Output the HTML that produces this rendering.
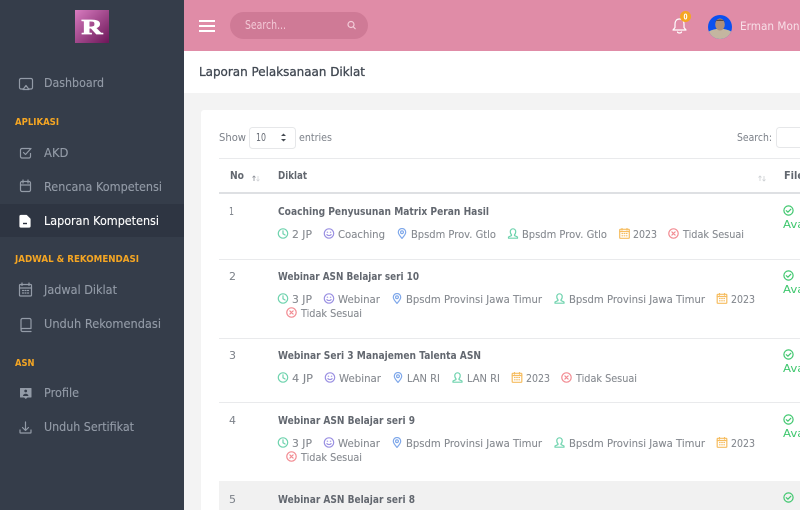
<!DOCTYPE html>
<html><head><meta charset="utf-8"><title>Laporan Pelaksanaan Diklat</title>
<style>
html,body{margin:0;padding:0;width:800px;height:510px;overflow:hidden;background:#f3f3f3}
svg{position:absolute;left:0;top:0;filter:blur(.35px)}
text{font-family:"DejaVu Sans","Liberation Sans",sans-serif;font-size:11px}
.n{fill:#939ba7;font-size:12px;stroke:#939ba7;stroke-width:.12}
.h{fill:#f5a623;font-size:9.5px;font-weight:700}
.m{fill:#85898f;font-size:11px;stroke:#85898f;stroke-width:.1}
.t{fill:#62676f;font-size:11px;font-weight:700}
.d{fill:#7c8189;font-size:11px}
.a{fill:#3fc76e;font-size:11px}
.i{fill:none;stroke-width:1.2;stroke-linecap:round;stroke-linejoin:round}
</style></head><body>
<svg width="800" height="510" viewBox="0 0 800 510" xmlns="http://www.w3.org/2000/svg">
<defs>
<linearGradient id="lg" x1="0" y1="0" x2="1" y2="1"><stop offset="0" stop-color="#d87cc0"/><stop offset="1" stop-color="#6c1658"/></linearGradient>
<symbol id="clock" viewBox="0 0 11 11"><g class="i" stroke="#6fd3ae"><circle cx="5.5" cy="5.5" r="4.7"/><path d="M5.5 2.8V5.8L7.6 7"/></g></symbol>
<symbol id="smile" viewBox="0 0 11 11"><g class="i" stroke="#9a90e2"><circle cx="5.5" cy="5.5" r="4.7"/><path d="M3.4 6.6C4.3 7.9 6.7 7.9 7.6 6.6M3.8 4.2h.3M6.9 4.2h.3"/></g></symbol>
<symbol id="pin" viewBox="0 0 11 11"><g class="i" stroke="#7fa8ea"><path d="M5.5 10.4C3.4 8 1.8 6.2 1.8 4.2a3.7 3.7 0 0 1 7.4 0C9.2 6.2 7.6 8 5.5 10.4Z"/><circle cx="5.5" cy="4.2" r="1.4"/></g></symbol>
<symbol id="user" viewBox="0 0 11 11"><g class="i" stroke="#6fd3ae"><path d="M5.5.8a2.7 2.7 0 0 0-2.7 2.8c0 1.3.5 2.5 1.2 3.1v.9L1 9v1.2h9V9L7 7.6v-.9c.7-.6 1.2-1.8 1.2-3.1A2.7 2.7 0 0 0 5.5.8Z"/></g></symbol>
<symbol id="cal" viewBox="0 0 11 11"><g class="i" stroke="#f6bd60"><rect x=".7" y="1.3" width="9.6" height="9" rx=".6"/><path d="M.7 3.5h9.6M3 .5v1.5M8 .5v1.5M3 5.5h.6M5.2 5.5h.6M7.4 5.5h.6M3 7.8h.6M5.2 7.8h.6M7.4 7.8h.6"/></g></symbol>
<symbol id="xc" viewBox="0 0 11 11"><g class="i" stroke="#f28b92"><circle cx="5.5" cy="5.5" r="4.7"/><path d="M3.9 3.9l3.2 3.2M7.1 3.9l-3.2 3.2"/></g></symbol>
<symbol id="ok" viewBox="0 0 11 11"><g class="i" stroke="#3fc76e"><circle cx="5.5" cy="5.5" r="4.6"/><path d="M3.3 5.7l1.6 1.5 2.9-2.9"/></g></symbol>
</defs>

<rect width="800" height="510" fill="#f3f3f3"/>
<rect x="184" y="0" width="616" height="51" fill="#e08ca7"/>
<rect x="184" y="51" width="616" height="42" fill="#fff"/>
<rect x="0" y="0" width="184" height="510" fill="#353d4a"/>
<rect x="0" y="204" width="184" height="33" fill="#2e3542"/>

<rect x="75" y="10" width="34" height="33" fill="url(#lg)"/>
<text x="81.500" y="34" textLength="21" lengthAdjust="spacingAndGlyphs" style="font-family:'Liberation Serif',serif;font-size:21px;font-weight:700" fill="#fff" stroke="#fff" stroke-width=".8">R</text>

<g class="i" stroke="#939ba7">
<path d="M23 89h-2a1.5 1.5 0 0 1-1.5-1.5V80a1.5 1.5 0 0 1 1.5-1.5h10a1.5 1.5 0 0 1 1.5 1.5v7.5A1.5 1.5 0 0 1 31 89h-2M26 85.500l-3 4h6Z"/>
<path d="M30 148.500H22a1.5 1.5 0 0 0-1.5 1.5v6.500a1.5 1.5 0 0 0 1.5 1.500h7a1.5 1.5 0 0 0 1.500-1.500v-3M23.500 152.500l2 2 5.500-6"/>
<rect x="20.500" y="181.500" width="10" height="10" rx="1.500"/><path d="M20.500 185h10M23 180v3M28 180v3"/>
<rect x="19.500" y="284.500" width="12" height="11.500" rx="1"/><path d="M19.500 288h12M22 283v2.500M29 283v2.500M22.500 290.500h1M25 290.500h1M27.500 290.500h1M22.500 293h1M25 293h1M27.500 293h1"/>
<path d="M21 329V320a1.500 1.500 0 0 1 1.500-1.500h7a1.500 1.500 0 0 1 1.500 1.500v8.500H22.500a1.500 1.500 0 0 0 0 3H31"/>
<path d="M25.500 422v8M22.500 427.500l3 3 3-3M20 430v2.500a.5.5 0 0 0 .5.5h10a.5.5 0 0 0 .5-.5V430"/>
</g>
<path d="M20.500 388h10.500a.5.5 0 0 1 .5.5v8.500a.5.5 0 0 1-.5.5h-3.500l-1.700 1.500-1.700-1.500H20.500a.5.5 0 0 1-.5-.5v-8.500a.5.5 0 0 1 .5-.5Z" fill="#939ba7"/>
<circle cx="25.700" cy="391" r="1.400" fill="#353d4a"/><path d="M23 396c0-3 5.400-3 5.400 0Z" fill="#353d4a"/>
<path d="M21 215.500h5.500l3.500 3.500v7a1 1 0 0 1-1 1h-8a1 1 0 0 1-1-1v-9.500a1 1 0 0 1 1-1Z" fill="#fff" stroke="#fff" stroke-width="1.200" stroke-linejoin="round"/>
<path d="M23 223.500h4" stroke="#2e3542" stroke-width="1.400"/>

<text class="n" x="44" y="87" textLength="60" lengthAdjust="spacingAndGlyphs">Dashboard</text>
<text class="h" x="15" y="125" textLength="44" lengthAdjust="spacingAndGlyphs">APLIKASI</text>
<text class="n" x="44" y="157" textLength="24.500" lengthAdjust="spacingAndGlyphs">AKD</text>
<text class="n" x="44" y="191" textLength="118" lengthAdjust="spacingAndGlyphs">Rencana Kompetensi</text>
<text class="n" x="44" y="225" textLength="115" lengthAdjust="spacingAndGlyphs" style="fill:#fff;stroke:#fff">Laporan Kompetensi</text>
<text class="h" x="15" y="262" textLength="124" lengthAdjust="spacingAndGlyphs">JADWAL &amp; REKOMENDASI</text>
<text class="n" x="44" y="294" textLength="73" lengthAdjust="spacingAndGlyphs">Jadwal Diklat</text>
<text class="n" x="44" y="328" textLength="117" lengthAdjust="spacingAndGlyphs">Unduh Rekomendasi</text>
<text class="h" x="15" y="366" textLength="19.500" lengthAdjust="spacingAndGlyphs">ASN</text>
<text class="n" x="44" y="397" textLength="35" lengthAdjust="spacingAndGlyphs">Profile</text>
<text class="n" x="44" y="431" textLength="90" lengthAdjust="spacingAndGlyphs">Unduh Sertifikat</text>

<path d="M199 21h16M199 26h16M199 31h16" stroke="#fff" stroke-width="2"/>
<rect x="230" y="12" width="138" height="27" rx="13.500" fill="#cf7a96"/>
<text x="245" y="29" textLength="41" lengthAdjust="spacingAndGlyphs" style="font-size:12px" fill="#f3c8d6">Search...</text>
<g class="i" stroke="#f3cbd8"><circle cx="351" cy="24.500" r="3"/><path d="M353.300 26.800l1.900 1.900"/></g>

<g class="i" stroke="#fff" stroke-width="1.600"><path d="M679.500 19c-3 0-4.500 2.200-4.500 5v3.500l-2 2.500h13l-2-2.500V24c0-2.800-1.500-5-4.500-5ZM677.500 32c.5 1.300 3.500 1.300 4 0"/></g>
<circle cx="685.500" cy="16.500" r="5.500" fill="#f5a623"/>
<text x="683.500" y="19.500" textLength="4" lengthAdjust="spacingAndGlyphs" style="font-size:7.500px;font-weight:700" fill="#fff">0</text>

<clipPath id="av"><circle cx="720" cy="27" r="12"/></clipPath>
<g clip-path="url(#av)">
<rect x="708" y="15" width="24" height="24" fill="#0a50f0"/>
<path d="M708 39v-7c3-2 6-2.500 8-3h8c2 .5 5 1 8 3v7Z" fill="#c4b6a0"/>
<ellipse cx="720" cy="24.500" rx="4.800" ry="6" fill="#ad8f7c"/>
<path d="M715.200 22.500c0-4 9.600-4 9.600 0l-1-1.500h-7.600Z" fill="#5a4a42"/>
</g>
<text x="740" y="30" textLength="66" lengthAdjust="spacingAndGlyphs" style="font-size:11.500px" fill="#f8e0e8">Erman Mone</text>

<text x="199" y="76" textLength="166" lengthAdjust="spacingAndGlyphs" style="font-size:12.500px" fill="#414852" stroke="#414852" stroke-width=".3">Laporan Pelaksanaan Diklat</text>

<rect x="201" y="110" width="620" height="420" rx="3" fill="#fff"/>

<text class="d" x="219" y="141" textLength="27" lengthAdjust="spacingAndGlyphs">Show</text>
<rect x="249.500" y="127.500" width="46" height="21" rx="3" fill="#fff" stroke="#e6e7e9"/>
<text x="256" y="141" textLength="10" lengthAdjust="spacingAndGlyphs" style="font-size:11px" fill="#666b74">10</text>
<path d="M281 136l2.500-2.500 2.500 2.500ZM281 139l2.500 2.500 2.500-2.500Z" fill="#444a52"/>
<text class="d" x="299" y="141" textLength="33" lengthAdjust="spacingAndGlyphs">entries</text>
<text class="d" x="737" y="141" textLength="35" lengthAdjust="spacingAndGlyphs">Search:</text>
<rect x="776.500" y="127.500" width="40" height="20" rx="3" fill="#fff" stroke="#e6e7e9"/>

<rect x="219" y="158" width="600" height="1" fill="#e9eaec"/>
<text class="t" x="230" y="179" textLength="14" lengthAdjust="spacingAndGlyphs">No</text>
<text class="t" x="278" y="179" textLength="29" lengthAdjust="spacingAndGlyphs">Diklat</text>
<text class="t" x="784" y="179" textLength="20" lengthAdjust="spacingAndGlyphs">File</text>
<path d="M254 181v-5M252.500 177.500l1.500-1.500 1.500 1.500" stroke="#8b8f97" fill="none" stroke-width=".8"/>
<path d="M258 176v5M256.500 179.500l1.500 1.500 1.500-1.500" stroke="#d3d5d8" fill="none" stroke-width=".8"/>
<path d="M760 181v-5M758.500 177.500l1.500-1.500 1.500 1.500M764 176v5M762.500 179.500l1.500 1.500 1.500-1.500" stroke="#cdd0d3" fill="none" stroke-width=".8"/>
<rect x="219" y="192" width="600" height="2" fill="#dee0e3"/>

<rect x="219" y="259" width="600" height="1" fill="#e9eaec"/>
<rect x="219" y="338" width="600" height="1" fill="#e9eaec"/>
<rect x="219" y="402" width="600" height="1" fill="#e9eaec"/>
<rect x="219" y="481" width="600" height="29" fill="#f1f1f1"/>

<!-- row 1 -->
<text class="d" x="229" y="215" textLength="5" lengthAdjust="spacingAndGlyphs">1</text>
<text class="t" x="278" y="215" textLength="211" lengthAdjust="spacingAndGlyphs">Coaching Penyusunan Matrix Peran Hasil</text>
<use href="#clock" x="277.500" y="228" width="11" height="11"/><text class="m" x="292" y="238" textLength="20" lengthAdjust="spacingAndGlyphs">2 JP</text>
<use href="#smile" x="323.500" y="228" width="11" height="11"/><text class="m" x="338" y="238" textLength="47" lengthAdjust="spacingAndGlyphs">Coaching</text>
<use href="#pin" x="396.500" y="228" width="11" height="11"/><text class="m" x="411" y="238" textLength="85" lengthAdjust="spacingAndGlyphs">Bpsdm Prov. Gtlo</text>
<use href="#user" x="507.500" y="228" width="11" height="11"/><text class="m" x="522" y="238" textLength="85" lengthAdjust="spacingAndGlyphs">Bpsdm Prov. Gtlo</text>
<use href="#cal" x="619" y="228" width="11" height="11"/><text class="m" x="633" y="238" textLength="24" lengthAdjust="spacingAndGlyphs">2023</text>
<use href="#xc" x="668" y="228" width="11" height="11"/><text class="m" x="683" y="238" textLength="61" lengthAdjust="spacingAndGlyphs">Tidak Sesuai</text>
<use href="#ok" x="783" y="205" width="11" height="11"/><text class="a" x="783" y="228" textLength="28" lengthAdjust="spacingAndGlyphs">Avail</text>

<!-- row 2 -->
<text class="d" x="229" y="280" textLength="7" lengthAdjust="spacingAndGlyphs">2</text>
<text class="t" x="278" y="280" textLength="141" lengthAdjust="spacingAndGlyphs">Webinar ASN Belajar seri 10</text>
<use href="#clock" x="277.500" y="293" width="11" height="11"/><text class="m" x="292" y="303" textLength="20" lengthAdjust="spacingAndGlyphs">3 JP</text>
<use href="#smile" x="323.500" y="293" width="11" height="11"/><text class="m" x="338" y="303" textLength="42" lengthAdjust="spacingAndGlyphs">Webinar</text>
<use href="#pin" x="391.500" y="293" width="11" height="11"/><text class="m" x="406" y="303" textLength="136" lengthAdjust="spacingAndGlyphs">Bpsdm Provinsi Jawa Timur</text>
<use href="#user" x="554" y="293" width="11" height="11"/><text class="m" x="569" y="303" textLength="136" lengthAdjust="spacingAndGlyphs">Bpsdm Provinsi Jawa Timur</text>
<use href="#cal" x="716.500" y="293" width="11" height="11"/><text class="m" x="731" y="303" textLength="24" lengthAdjust="spacingAndGlyphs">2023</text>
<use href="#xc" x="286" y="307" width="11" height="11"/><text class="m" x="301" y="317" textLength="61" lengthAdjust="spacingAndGlyphs">Tidak Sesuai</text>
<use href="#ok" x="783" y="270" width="11" height="11"/><text class="a" x="783" y="293" textLength="28" lengthAdjust="spacingAndGlyphs">Avail</text>

<!-- row 3 -->
<text class="d" x="229" y="359" textLength="7" lengthAdjust="spacingAndGlyphs">3</text>
<text class="t" x="278" y="359" textLength="203" lengthAdjust="spacingAndGlyphs">Webinar Seri 3 Manajemen Talenta ASN</text>
<use href="#clock" x="277.500" y="372" width="11" height="11"/><text class="m" x="292" y="382" textLength="21" lengthAdjust="spacingAndGlyphs">4 JP</text>
<use href="#smile" x="324.500" y="372" width="11" height="11"/><text class="m" x="339" y="382" textLength="42" lengthAdjust="spacingAndGlyphs">Webinar</text>
<use href="#pin" x="392.500" y="372" width="11" height="11"/><text class="m" x="407" y="382" textLength="33" lengthAdjust="spacingAndGlyphs">LAN RI</text>
<use href="#user" x="452" y="372" width="11" height="11"/><text class="m" x="467" y="382" textLength="33" lengthAdjust="spacingAndGlyphs">LAN RI</text>
<use href="#cal" x="511.500" y="372" width="11" height="11"/><text class="m" x="526" y="382" textLength="24" lengthAdjust="spacingAndGlyphs">2023</text>
<use href="#xc" x="561" y="372" width="11" height="11"/><text class="m" x="576" y="382" textLength="61" lengthAdjust="spacingAndGlyphs">Tidak Sesuai</text>
<use href="#ok" x="783" y="349" width="11" height="11"/><text class="a" x="783" y="372" textLength="28" lengthAdjust="spacingAndGlyphs">Avail</text>

<!-- row 4 -->
<text class="d" x="229" y="424" textLength="7" lengthAdjust="spacingAndGlyphs">4</text>
<text class="t" x="278" y="424" textLength="137" lengthAdjust="spacingAndGlyphs">Webinar ASN Belajar seri 9</text>
<use href="#clock" x="277.500" y="437" width="11" height="11"/><text class="m" x="292" y="447" textLength="20" lengthAdjust="spacingAndGlyphs">3 JP</text>
<use href="#smile" x="323.500" y="437" width="11" height="11"/><text class="m" x="338" y="447" textLength="42" lengthAdjust="spacingAndGlyphs">Webinar</text>
<use href="#pin" x="391.500" y="437" width="11" height="11"/><text class="m" x="406" y="447" textLength="136" lengthAdjust="spacingAndGlyphs">Bpsdm Provinsi Jawa Timur</text>
<use href="#user" x="554" y="437" width="11" height="11"/><text class="m" x="569" y="447" textLength="136" lengthAdjust="spacingAndGlyphs">Bpsdm Provinsi Jawa Timur</text>
<use href="#cal" x="716.500" y="437" width="11" height="11"/><text class="m" x="731" y="447" textLength="24" lengthAdjust="spacingAndGlyphs">2023</text>
<use href="#xc" x="286" y="451" width="11" height="11"/><text class="m" x="301" y="461" textLength="61" lengthAdjust="spacingAndGlyphs">Tidak Sesuai</text>
<use href="#ok" x="783" y="414" width="11" height="11"/><text class="a" x="783" y="437" textLength="28" lengthAdjust="spacingAndGlyphs">Avail</text>

<!-- row 5 -->
<text class="d" x="229" y="503" textLength="7" lengthAdjust="spacingAndGlyphs">5</text>
<text class="t" x="278" y="503" textLength="137" lengthAdjust="spacingAndGlyphs">Webinar ASN Belajar seri 8</text>
<use href="#ok" x="783" y="492" width="11" height="11"/>
</svg>
</body></html>
